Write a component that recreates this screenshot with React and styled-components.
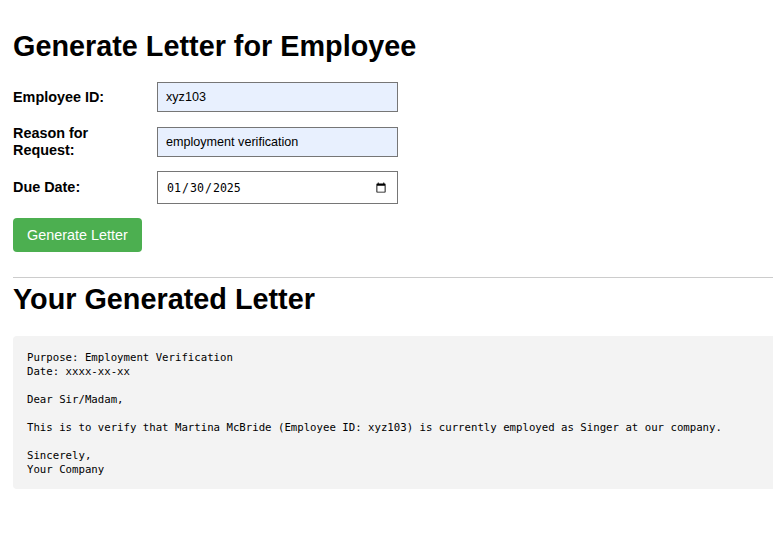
import React, { useState } from "react";
import styled, { createGlobalStyle } from "styled-components";

const GlobalStyle = createGlobalStyle`
  html, body {
    margin: 0;
    padding: 0;
    background: #fff;
    overflow: hidden;
  }
  body {
    font-family: "Liberation Sans", Arial, sans-serif;
    color: #000;
  }
`;

const letterText = `Purpose: Employment Verification
Date: xxxx-xx-xx

Dear Sir/Madam,

This is to verify that Martina McBride (Employee ID: xyz103) is currently employed as Singer at our company.

Sincerely,
Your Company`;

const App = () => {
  const [employeeId, setEmployeeId] = useState("xyz103");
  const [reason, setReason] = useState("employment verification");
  const [dueDate, setDueDate] = useState("2025-01-30");

  return (
    <Page>
      <GlobalStyle />
      <Title>Generate Letter for Employee</Title>
      <Form onSubmit={(e) => e.preventDefault()}>
        <Row>
          <Label htmlFor="employeeId">Employee ID:</Label>
          <Input
            id="employeeId"
            $filled
            value={employeeId}
            onChange={(e) => setEmployeeId(e.target.value)}
          />
        </Row>
        <Row>
          <Label htmlFor="reason">Reason for Request:</Label>
          <Input
            id="reason"
            $filled
            value={reason}
            onChange={(e) => setReason(e.target.value)}
          />
        </Row>
        <Row>
          <Label htmlFor="dueDate">Due Date:</Label>
          <DateInput
            id="dueDate"
            type="date"
            value={dueDate}
            onChange={(e) => setDueDate(e.target.value)}
          />
        </Row>
        <Button type="submit">Generate Letter</Button>
      </Form>
      <Divider />
      <Title as="h2" $top={5}>Your Generated Letter</Title>
      <LetterBox>
        <LetterText>{letterText}</LetterText>
      </LetterBox>
    </Page>
  );
};

const Page = styled.div`
  width: 800px;
  padding: 0 13px;
`;

const Title = styled.h1`
  font-size: 28.8px;
  font-weight: bold;
  line-height: 33px;
  margin: ${(p) => (p.$top !== undefined ? `${p.$top}px 0 20px` : "30px 0 19px")};
`;

const Form = styled.form`
  display: flex;
  flex-direction: column;
  align-items: flex-start;
`;

const Row = styled.div`
  display: flex;
  align-items: center;
  margin-bottom: 13px;
`;

const Label = styled.label`
  width: 130px;
  margin-right: 14px;
  font-size: 14.4px;
  font-weight: bold;
  line-height: 16.5px;
`;

const Input = styled.input`
  box-sizing: border-box;
  width: 241px;
  height: 30px;
  padding: 0 8px;
  border: 1px solid #767676;
  border-radius: 0;
  background: ${(p) => (p.$filled ? "#e8f0fe" : "#fff")};
  font-family: "Liberation Sans", Arial, sans-serif;
  font-size: 12.6px;
  color: #000;
  outline: none;
`;

const DateInput = styled(Input)`
  height: 33px;
  font-family: "DejaVu Sans Mono", "Liberation Mono", monospace;
  font-size: 11.6px;
`;

const Button = styled.button`
  margin-top: 1px;
  padding: 0 14px;
  height: 34px;
  border: none;
  border-radius: 4px;
  background: #4caf50;
  color: #fff;
  font-family: "Liberation Sans", Arial, sans-serif;
  font-size: 14.4px;
  cursor: pointer;
`;

const Divider = styled.hr`
  margin: 25px 0 0;
  border: none;
  border-top: 1px solid #cccccc;
`;

const LetterBox = styled.div`
  background: #f3f3f3;
  border-radius: 4px;
  padding: 15px 14px 12px;
`;

const LetterText = styled.pre`
  margin: 0;
  font-family: "DejaVu Sans Mono", "Liberation Mono", monospace;
  font-size: 10.7px;
  line-height: 14px;
  color: #000;
  white-space: pre-wrap;
`;

export default App;
